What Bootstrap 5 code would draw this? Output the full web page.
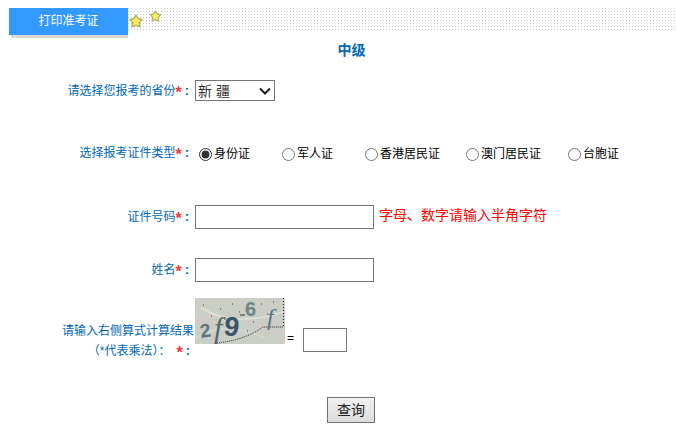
<!DOCTYPE html>
<html lang="zh-CN">
<head>
    <meta charset="UTF-8">
    <meta name="viewport" content="width=device-width, initial-scale=1.0">
    <title>打印准考证</title>
    <link href="https://cdn.jsdelivr.net/npm/bootstrap@5.3.0/dist/css/bootstrap.min.css" rel="stylesheet">
    <style>
        body { font-family: "Liberation Sans", "Noto Sans CJK SC", sans-serif; font-size: 12px; color: #000; background: #fff; overflow: hidden; }
        .page-wrap { padding: 8px 2px 0 9px; width: 677px; }
        .head-bar { position: relative; height: 30px; }
        .head-tab { width: 119px; height: 27px; line-height: 27px; background: #3399ff; color: #fff; text-align: center; box-shadow: 1px 4px 0 -1px #d8d8d8; flex: none; }
        .head-dots { flex: 1; height: 22px; background-image: linear-gradient(to bottom, transparent 1px, #fff 1px), linear-gradient(to right, #ccc 1px, #fff 1px); background-size: 3px 3px; }
        .star-a, .star-b { position: absolute; }
        .star-a { left: 120px; top: 6px; }
        .star-b { left: 140px; top: 2px; }
        .exam-title { color: #0068b5; font-size: 14px; font-weight: 700; line-height: 20px; text-align: center; margin-top: 2px; padding-left: 19px; }
        .form-line { margin-left: -9px; }
        .line-label { width: 190px; margin-right: 5px; color: #0068b5; text-align: right; flex: none; white-space: nowrap; }
        .req { color: #f33; font-size: 16px; font-weight: 700; line-height: 12px; vertical-align: -3px; }
        .colon-mark { font-weight: 700; font-size: 13px; padding: 0 1px 0 3px; }
        .line-province { margin-top: 20px; height: 21px; }
        .line-type { margin-top: 42px; height: 20px; }
        .line-idno { margin-top: 42px; height: 24px; }
        .line-name { margin-top: 29px; height: 24px; }
        .line-code { margin-top: 16px; height: 55px; }
        .line-submit { margin-top: 44px; padding-left: 327px; }
        .prov-select { appearance: none; width: 80px; height: 21px; font-size: 14px; font-family: inherit; color: #333; border: 1px solid #767676; border-radius: 0; padding: 0 0 0 2px; background: #fff url("data:image/svg+xml,%3Csvg xmlns='http://www.w3.org/2000/svg' width='12' height='8'%3E%3Cpath d='M1 1.5l5 5 5-5' fill='none' stroke='%23222' stroke-width='2'/%3E%3C/svg%3E") no-repeat right 3px center; }
        .type-grid { display: grid; grid-template-columns: 83px 83px 101px 102px auto; padding-left: 4px; }
        .type-item { display: flex; align-items: center; padding-top: 1px; }
        .type-item input { width: 13px; height: 13px; margin: 1px 2px 0 0; accent-color: #333; }
        .txt-box { width: 179px; height: 24px; border: 1px solid #767676; padding: 0 2px; background: #fff; }
        .id-tip { color: #f00; font-size: 14px; margin: 0 0 3px 5px; }
        .code-label { width: 195px; color: #0068b5; text-align: right; line-height: 20px; flex: none; margin-top: 23px; padding-right: 1px; white-space: nowrap; }
        .code-second { padding-right: 3px; }
        .paren-gap { padding-right: 6px; }
        .code-img { width: 90px; height: 46px; display: block; flex: none; }
        .code-eq { margin: 32px 9px 0 2px; line-height: 16px; }
        .code-box { width: 44px; height: 24px; border: 1px solid #767676; margin-top: 30px; background: #fff; padding: 0 2px; }
        .query-btn { width: 48px; height: 26px; padding: 0; font-size: 14px; line-height: 22px; color: #222; border: 1px solid #707070; border-radius: 0; background: linear-gradient(#f0f0f0, #dcdcdc); }
    </style>
</head>
<body>
    <div class="page-wrap">
        <div class="head-bar d-flex align-items-start">
            <div class="head-tab">打印准考证</div>
            <div class="head-dots"></div>
            <svg class="star-a" width="14" height="14" viewBox="0 0 15 15"><polygon points="7.5,1.2 9.8,5 14,5.8 11,9.2 11.8,13.8 7.5,12 3.2,13.8 4,9.2 1,5.8 5.2,5" fill="#f7ef5c" stroke="#b9b36f" stroke-width="1.6" stroke-linejoin="round"/></svg>
            <svg class="star-b" width="13" height="12" viewBox="0 0 15 15"><polygon points="7.5,1.2 9.8,5 14,5.8 11,9.2 11.8,13.8 7.5,12 3.2,13.8 4,9.2 1,5.8 5.2,5" fill="#f7ef5c" stroke="#b9b36f" stroke-width="1.6" stroke-linejoin="round"/></svg>
        </div>
        <div class="exam-title">中级</div>

        <form>
            <div class="form-line line-province d-flex align-items-center">
                <label class="line-label">请选择您报考的省份<span class="req">*</span><span class="colon-mark">:</span></label>
                <select class="prov-select"><option>新 疆</option></select>
            </div>

            <div class="form-line line-type d-flex align-items-center">
                <label class="line-label">选择报考证件类型<span class="req">*</span><span class="colon-mark">:</span></label>
                <div class="type-grid">
                    <label class="type-item"><input type="radio" name="idtype" checked>身份证</label>
                    <label class="type-item"><input type="radio" name="idtype">军人证</label>
                    <label class="type-item"><input type="radio" name="idtype">香港居民证</label>
                    <label class="type-item"><input type="radio" name="idtype">澳门居民证</label>
                    <label class="type-item"><input type="radio" name="idtype">台胞证</label>
                </div>
            </div>

            <div class="form-line line-idno d-flex align-items-center">
                <label class="line-label">证件号码<span class="req">*</span><span class="colon-mark">:</span></label>
                <input class="txt-box" type="text">
                <span class="id-tip">字母、数字请输入半角字符</span>
            </div>

            <div class="form-line line-name d-flex align-items-center">
                <label class="line-label">姓名<span class="req">*</span><span class="colon-mark">:</span></label>
                <input class="txt-box" type="text">
            </div>

            <div class="form-line line-code d-flex align-items-start">
                <label class="code-label">请输入右侧算式计算结果<br><span class="code-second">（*代表乘法）：<span class="paren-gap"></span><span class="req">*</span><span class="colon-mark">:</span></span></label>
                <svg class="code-img" viewBox="0 0 90 46">
                    <rect width="90" height="46" fill="#cbcec5"/>
                    <path d="M0 24 Q30 12 60 26 T90 32" fill="none" stroke="#d8c6cb" stroke-width="1.5"/>
                    <path d="M6 10 Q40 30 88 14" fill="none" stroke="#dfe2da" stroke-width="1.5"/>
                    <path d="M0 40 Q30 22 70 40" fill="none" stroke="#d5d8cf" stroke-width="1.5"/>
                    <path d="M22 45 Q50 42 68 29 L88 29" fill="none" stroke="#222" stroke-width="1" stroke-dasharray="1 1"/>
                    <path d="M88.500 0 V29" fill="none" stroke="#222" stroke-width="1" stroke-dasharray="1 2"/>
                    <path d="M8 7h1M16 18h1M25 11h1M37 6h1M44 14h1M58 24h1M66 6h1M72 16h1M12 28h1M52 33h1M78 4h1" stroke="#444" stroke-width="1"/>
                    <text x="5" y="39" font-family="Liberation Sans" font-size="19" font-weight="700" fill="#5d7480" transform="rotate(-8 11 33)">2</text>
                    <text x="19" y="40" font-family="Liberation Serif" font-size="30" font-style="italic" fill="#54686f">f</text>
                    <text x="29" y="38" font-family="Liberation Sans" font-size="27" font-weight="700" fill="#3c5468" transform="rotate(8 37 30)">9</text>
                    <rect x="45" y="16" width="5" height="2" fill="#6e8a80"/>
                    <text x="50" y="18" font-family="Liberation Sans" font-size="20" font-weight="700" fill="#6b8780">6</text>
                    <text x="72" y="27" font-family="Liberation Serif" font-size="24" font-style="italic" fill="#5d7480">f</text>
                </svg>
                <span class="code-eq">=</span>
                <input class="code-box" type="text">
            </div>

            <div class="form-line line-submit">
                <button class="btn query-btn" type="button">查询</button>
            </div>
        </form>
    </div>
    <script src="https://cdn.jsdelivr.net/npm/bootstrap@5.3.0/dist/js/bootstrap.bundle.min.js"></script>
</body>
</html>
